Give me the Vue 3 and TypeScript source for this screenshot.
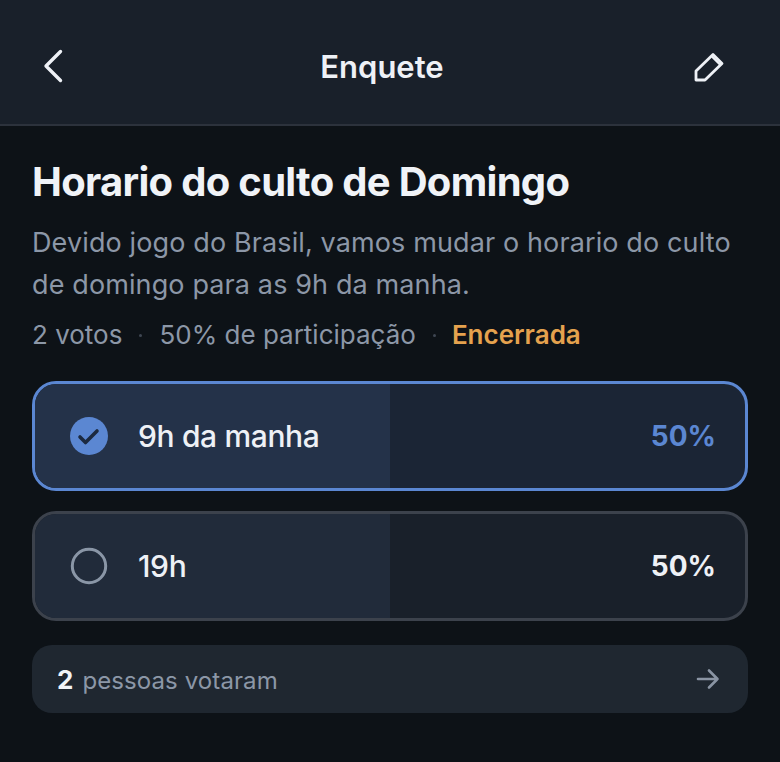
<script setup lang="ts">
interface PollOption {
  label: string
  percent: number
  voted: boolean
}

const options: PollOption[] = [
  { label: '9h da manha', percent: 50, voted: true },
  { label: '19h', percent: 50, voted: false },
]
</script>

<template>
  <div class="screen">
    <header class="topbar">
      <button class="icon-btn" aria-label="Voltar">
        <svg width="40" height="40" viewBox="0 0 40 40" fill="none">
          <path d="M28.5 5.5 L14 20 L28.5 34.5" stroke="#eef1f6" stroke-width="3.4" stroke-linecap="round" stroke-linejoin="round" />
        </svg>
      </button>
      <h1 class="topbar-title">Enquete</h1>
      <button class="icon-btn" aria-label="Editar">
        <svg width="40" height="40" viewBox="0 0 40 40" fill="none">
          <path d="M21 8.5 L30 17.5 L13 34 H4 V25 Z" stroke="#eef1f6" stroke-width="2.8" stroke-linecap="round" stroke-linejoin="round" />
          <path d="M20.5 11 L27.5 18" stroke="#eef1f6" stroke-width="2.4" stroke-linecap="round" />
        </svg>
      </button>
    </header>

    <main class="content">
      <h2 class="poll-title">Horario do culto de Domingo</h2>
      <p class="poll-desc">Devido jogo do Brasil, vamos mudar o horario do culto de domingo para as 9h da manha.</p>
      <div class="meta">
        <span>2 votos</span>
        <span class="dot"></span>
        <span>50% de participação</span>
        <span class="dot"></span>
        <span class="closed">Encerrada</span>
      </div>

      <div class="options">
        <div v-for="opt in options" :key="opt.label" class="option" :class="{ voted: opt.voted }">
          <div class="option-fill" :style="{ width: opt.percent + '%' }"></div>
          <div class="option-row">
            <svg v-if="opt.voted" class="radio" width="38" height="38" viewBox="0 0 38 38">
              <circle cx="19" cy="19" r="19" fill="#5b87d2" />
              <path d="M10 20 L15.5 25.5 L27 14" fill="none" stroke="#1c2a40" stroke-width="3.6" stroke-linecap="round" stroke-linejoin="round" />
            </svg>
            <svg v-else class="radio" width="38" height="38" viewBox="0 0 38 38">
              <circle cx="19" cy="19" r="16.7" fill="none" stroke="#8a96a6" stroke-width="3" />
            </svg>
            <span class="option-label">{{ opt.label }}</span>
            <span class="option-percent">{{ opt.percent }}%</span>
          </div>
        </div>
      </div>

      <div class="voters">
        <strong class="voters-count">2</strong>
        <span class="voters-text">pessoas votaram</span>
        <svg class="voters-arrow" width="24" height="24" viewBox="0 0 24 24" fill="none">
          <path d="M2 12 H21.5 M13 3.5 L21.5 12 L13 20.5" stroke="#8a94a3" stroke-width="2.6" stroke-linecap="round" stroke-linejoin="round" />
        </svg>
      </div>
    </main>
  </div>
</template>

<style>
html,
body {
  margin: 0;
  background: #0d1217;
}
</style>

<style scoped>
.screen {
  width: 780px;
  height: 762px;
  overflow: hidden;
  background: #0d1217;
  font-family: Inter, "Liberation Sans", sans-serif;
  color: #eef1f6;
}

.topbar {
  height: 126px;
  box-sizing: border-box;
  border-bottom: 2px solid #2c323c;
  background: #19202a;
  display: flex;
  align-items: center;
  justify-content: space-between;
  padding: 8px 48px 0 32px;
}

.icon-btn {
  width: 40px;
  height: 40px;
  padding: 0;
  border: none;
  background: none;
  display: flex;
}

.topbar-title {
  margin: 0;
  font-size: 31px;
  font-weight: 600;
  color: #eef1f6;
}

.content {
  padding: 31px 32px 0;
}

.poll-title {
  margin: 0;
  font-size: 40px;
  line-height: 50px;
  font-weight: 700;
  letter-spacing: -0.7px;
  color: #f0f3f7;
}

.poll-desc {
  margin: 15px 0 0;
  font-size: 27px;
  line-height: 42px;
  letter-spacing: 0.12px;
  color: #8c97a7;
}

.meta {
  margin-top: 11px;
  display: flex;
  align-items: center;
  gap: 17px;
  font-size: 26px;
  line-height: 36px;
  color: #8c97a7;
}

.dot {
  width: 3px;
  height: 3px;
  border-radius: 50%;
  background: #3f4753;
}

.closed {
  margin-left: -1px;
  color: #e5a24e;
  font-weight: 600;
}

.options {
  margin-top: 28px;
  display: flex;
  flex-direction: column;
  gap: 20px;
}

.option {
  position: relative;
  height: 110px;
  box-sizing: border-box;
  border: 3px solid #3c424c;
  border-radius: 24px;
  background: #19202a;
  overflow: hidden;
}

.option.voted {
  border-color: #5b87d2;
  background: #1b2535;
}

.option-fill {
  position: absolute;
  top: 0;
  bottom: 0;
  left: 0;
  background: #212b3a;
}

.option.voted .option-fill {
  background: #243249;
}

.option-row {
  position: relative;
  height: 100%;
  display: flex;
  align-items: center;
  padding: 0 29px 0 35px;
}

.radio {
  flex-shrink: 0;
}

.option-label {
  margin: -1px 0 0 30px;
  flex: 1;
  font-size: 30px;
  font-weight: 500;
  letter-spacing: -0.35px;
  color: #eef1f6;
}

.option-percent {
  font-size: 28px;
  font-weight: 700;
  color: #eef1f6;
}

.option.voted .option-percent {
  color: #5b87d2;
}

.voters {
  margin-top: 24px;
  height: 68px;
  padding: 0 28px 0 25px;
  border-radius: 20px;
  background: #1f2730;
  display: flex;
  align-items: center;
}

.voters-count {
  font-size: 26px;
  font-weight: 700;
  color: #f0f3f7;
}

.voters-text {
  margin: 2px 0 0 9px;
  flex: 1;
  font-size: 24px;
  letter-spacing: 0.1px;
  color: #8c97a7;
}
</style>
